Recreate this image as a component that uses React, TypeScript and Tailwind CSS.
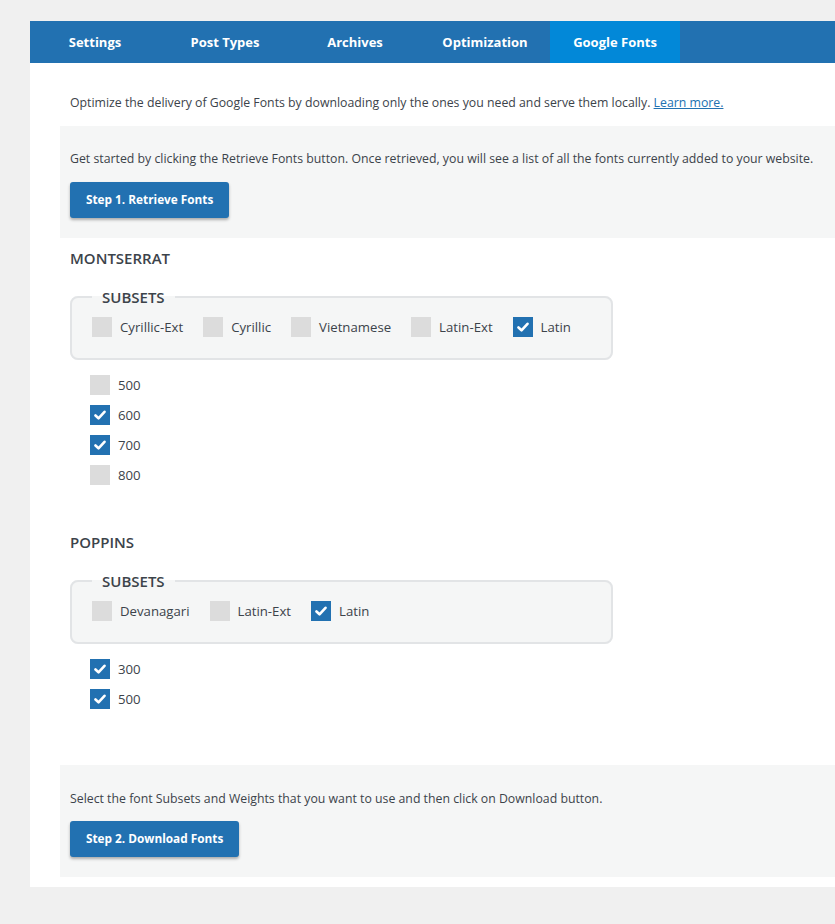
import { useState } from 'react'

type Option = { label: string; checked: boolean }

type FontEntry = {
  name: string
  subsets: Option[]
  weights: Option[]
}

const initialFonts: FontEntry[] = [
  {
    name: 'MONTSERRAT',
    subsets: [
      { label: 'Cyrillic-Ext', checked: false },
      { label: 'Cyrillic', checked: false },
      { label: 'Vietnamese', checked: false },
      { label: 'Latin-Ext', checked: false },
      { label: 'Latin', checked: true },
    ],
    weights: [
      { label: '500', checked: false },
      { label: '600', checked: true },
      { label: '700', checked: true },
      { label: '800', checked: false },
    ],
  },
  {
    name: 'POPPINS',
    subsets: [
      { label: 'Devanagari', checked: false },
      { label: 'Latin-Ext', checked: false },
      { label: 'Latin', checked: true },
    ],
    weights: [
      { label: '300', checked: true },
      { label: '500', checked: true },
    ],
  },
]

const tabs = ['Settings', 'Post Types', 'Archives', 'Optimization', 'Google Fonts']

function Check({ checked, label, onToggle }: { checked: boolean; label: string; onToggle: () => void }) {
  return (
    <label className="flex items-center gap-2 cursor-pointer select-none" onClick={onToggle}>
      <span
        className={`flex h-5 w-5 items-center justify-center ${checked ? 'bg-[#2271b1]' : 'bg-[#dcdcdc]'}`}
      >
        {checked && (
          <svg width="12" height="10" viewBox="0 0 12 10">
            <path d="M1.5 5.5 L4.5 8.3 L10.5 1.8" fill="none" stroke="#fff" strokeWidth="2.6" strokeLinecap="round" strokeLinejoin="round" />
          </svg>
        )}
      </span>
      <span className="text-[13.2px] leading-5 text-[#3c434a]">{label}</span>
    </label>
  )
}

function StepButton({ children }: { children: string }) {
  return (
    <button className="h-9 rounded-[3px] bg-[#2271b1] px-4 text-[11.8px] font-bold text-white shadow-[0_2px_3px_rgba(0,0,0,0.3)]">
      {children}
    </button>
  )
}

export default function App() {
  const [fonts, setFonts] = useState(initialFonts)

  const toggle = (fi: number, key: 'subsets' | 'weights', i: number) => {
    setFonts(prev =>
      prev.map((f, idx) =>
        idx !== fi
          ? f
          : { ...f, [key]: f[key].map((o, j) => (j === i ? { ...o, checked: !o.checked } : o)) }
      )
    )
  }

  return (
    <div className="min-h-[924px] overflow-hidden bg-[#f0f0f0] pt-[21px] pl-[30px] font-['Open_Sans','Noto_Sans',sans-serif] text-[#3c434a]">
      <div className="w-[900px] bg-white pb-[10px]">
        {/* tab bar */}
        <div className="flex h-[42px] bg-[#2271b1]">
          {tabs.map(t => (
            <div
              key={t}
              className={`flex w-[130px] items-center justify-center pt-[2px] text-[13px] font-bold text-white ${
                t === 'Google Fonts' ? 'bg-[#0288d8]' : ''
              }`}
            >
              {t}
            </div>
          ))}
        </div>

        <p className="px-10 pt-[30px] text-[12.3px] leading-5">
          Optimize the delivery of Google Fonts by downloading only the ones you need and serve them locally.{' '}
          <a href="#" className="text-[#2271b1] underline">
            Learn more.
          </a>
        </p>

        <div className="ml-[30px] mt-[13px] bg-[#f5f6f6] px-[10px] pt-[23px] pb-5">
          <p className="text-[12.3px] leading-5">
            Get started by clicking the Retrieve Fonts button. Once retrieved, you will see a list of all the fonts currently added to your website.
          </p>
          <div className="mt-[13px]">
            <StepButton>Step 1. Retrieve Fonts</StepButton>
          </div>
        </div>

        <div className="px-10">
          {fonts.map((font, fi) => (
            <div key={font.name} className={fi === 0 ? 'pt-[10px]' : 'pt-[47px]'}>
              <h3 className="text-[15px] font-semibold leading-5 text-[#3c434a]">{font.name}</h3>
              <fieldset className="mt-[19px] w-[543px] rounded-lg border-2 border-[#e2e4e6] bg-[#f5f6f6] px-5 pt-[10px] pb-[21px]">
                <legend className="px-[10px] text-[15px] font-semibold leading-5">SUBSETS</legend>
                <div className="flex gap-5">
                  {font.subsets.map((s, i) => (
                    <Check key={s.label} checked={s.checked} label={s.label} onToggle={() => toggle(fi, 'subsets', i)} />
                  ))}
                </div>
              </fieldset>
              <div className="mt-[15px] flex flex-col gap-[10px] pl-5">
                {font.weights.map((w, i) => (
                  <Check key={w.label} checked={w.checked} label={w.label} onToggle={() => toggle(fi, 'weights', i)} />
                ))}
              </div>
            </div>
          ))}
        </div>

        <div className="ml-[30px] mt-[56px] bg-[#f5f6f6] px-[10px] pt-6 pb-5">
          <p className="text-[12.3px] leading-5">
            Select the font Subsets and Weights that you want to use and then click on Download button.
          </p>
          <div className="mt-3">
            <StepButton>Step 2. Download Fonts</StepButton>
          </div>
        </div>
      </div>
    </div>
  )
}
